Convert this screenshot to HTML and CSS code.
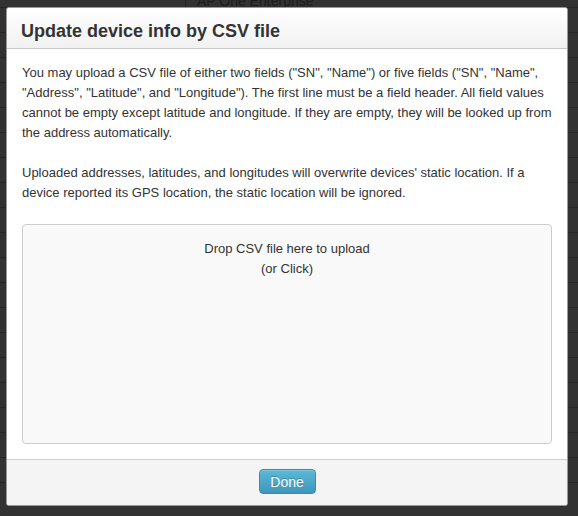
FILE: index.html
```html
<!DOCTYPE html>
<html>
<head>
<meta charset="utf-8">
<link rel="stylesheet" href="styles.css">
</head>
<body>
<div class="page">
  <div class="row first"><span class="cell-left"></span><span class="cell">AP One Enterprise</span></div>
  <div class="row"><span class="cell-left"></span><span class="cell"></span></div>
  <div class="row"><span class="cell-left"></span><span class="cell"></span></div>
  <div class="row"><span class="cell-left"></span><span class="cell"></span></div>
  <div class="row"><span class="cell-left"></span><span class="cell"></span></div>
  <div class="row"><span class="cell-left"></span><span class="cell"></span></div>
  <div class="row"><span class="cell-left"></span><span class="cell"></span></div>
  <div class="row"><span class="cell-left"></span><span class="cell"></span></div>
  <div class="row"><span class="cell-left"></span><span class="cell"></span></div>
  <div class="row"><span class="cell-left"></span><span class="cell"></span></div>
  <div class="row"><span class="cell-left"></span><span class="cell"></span></div>
  <div class="row"><span class="cell-left"></span><span class="cell"></span></div>
  <div class="row"><span class="cell-left"></span><span class="cell"></span></div>
  <div class="row"><span class="cell-left"></span><span class="cell"></span></div>
  <div class="row"><span class="cell-left"></span><span class="cell"></span></div>
  <div class="row"><span class="cell-left"></span><span class="cell"></span></div>
  <div class="row"><span class="cell-left"></span><span class="cell"></span></div>
  <div class="row"><span class="cell-left"></span><span class="cell"></span></div>
  <div class="row"><span class="cell-left"></span><span class="cell"></span></div>
  <div class="row"><span class="cell-left"></span><span class="cell">WiFi Client Adapter</span></div>
</div>

<div class="modal">
  <div class="modal-header">
    <h3 class="modal-title">Update device info by CSV file</h3>
  </div>
  <div class="modal-body">
    <p>You may upload a CSV file of either two fields ("SN", "Name") or five fields ("SN", "Name", "Address", "Latitude", and "Longitude"). The first line must be a field header. All field values cannot be empty except latitude and longitude. If they are empty, they will be looked up from the address automatically.</p>
    <p>Uploaded addresses, latitudes, and longitudes will overwrite devices' static location. If a device reported its GPS location, the static location will be ignored.</p>
    <div class="dropzone">
      <div>Drop CSV file here to upload</div>
      <div>(or Click)</div>
    </div>
  </div>
  <div class="modal-footer">
    <button class="btn-done">Done</button>
  </div>
</div>
</body>
</html>
```

FILE: styles.css
```css
html, body {
  margin: 0;
  padding: 0;
}
body {
  width: 578px;
  height: 516px;
  overflow: hidden;
  background: #323232;
  font-family: "Liberation Sans", Arial, sans-serif;
  position: relative;
}
.page {
  display: flex;
  flex-direction: column;
}
.row {
  height: 24px;
  border-bottom: 1px solid #262626;
  display: flex;
  font-size: 14px;
  color: #1c1c1c;
}
.row.first {
  height: 14px;
  margin-top: -7px;
}
.cell-left {
  width: 185px;
  border-right: 1px solid #232323;
}
.cell {
  padding-left: 11px;
  line-height: 17px;
}
.modal {
  position: absolute;
  left: 6px;
  top: 7px;
  width: 562px;
  height: 499px;
  background: #fff;
  border: 1px solid #999;
  border-radius: 3px;
  display: flex;
  flex-direction: column;
  box-sizing: border-box;
  overflow: hidden;
}
.modal-header {
  height: 40px;
  flex: none;
  background: linear-gradient(#ffffff, #f1f1f1);
  border-bottom: 1px solid #c8c8c8;
  padding: 13px 14px 0;
  box-sizing: content-box;
  height: 27px;
}
.modal-title {
  margin: 0;
  font-size: 18px;
  line-height: 20px;
  font-weight: bold;
  color: #333;
}
.modal-body {
  flex: 1;
  padding: 14px 15px 15px;
  font-size: 13px;
  line-height: 20px;
  color: #333;
  display: flex;
  flex-direction: column;
}
.modal-body p {
  margin: 0 0 20px;
}
.dropzone {
  flex: 1;
  margin-top: 1px;
  border: 1px solid #ccc;
  border-radius: 4px;
  background: #f9f9f9;
  text-align: center;
  padding-top: 14px;
}
.modal-footer {
  height: 46px;
  flex: none;
  background: #f4f4f4;
  border-top: 1px solid #cfcfcf;
  display: flex;
  justify-content: center;
  align-items: flex-start;
  padding-top: 9px;
  box-sizing: border-box;
}
.btn-done {
  width: 57px;
  height: 25px;
  padding: 0;
  font-family: "Liberation Sans", Arial, sans-serif;
  font-size: 14px;
  color: #fff;
  text-shadow: 0 -1px 0 rgba(0,0,0,0.25);
  background: linear-gradient(#5cb9d9, #3f96bb);
  border: 1px solid #3a8db0;
  border-radius: 4px;
  box-shadow: inset 0 1px 0 rgba(255,255,255,0.2);
}
```
